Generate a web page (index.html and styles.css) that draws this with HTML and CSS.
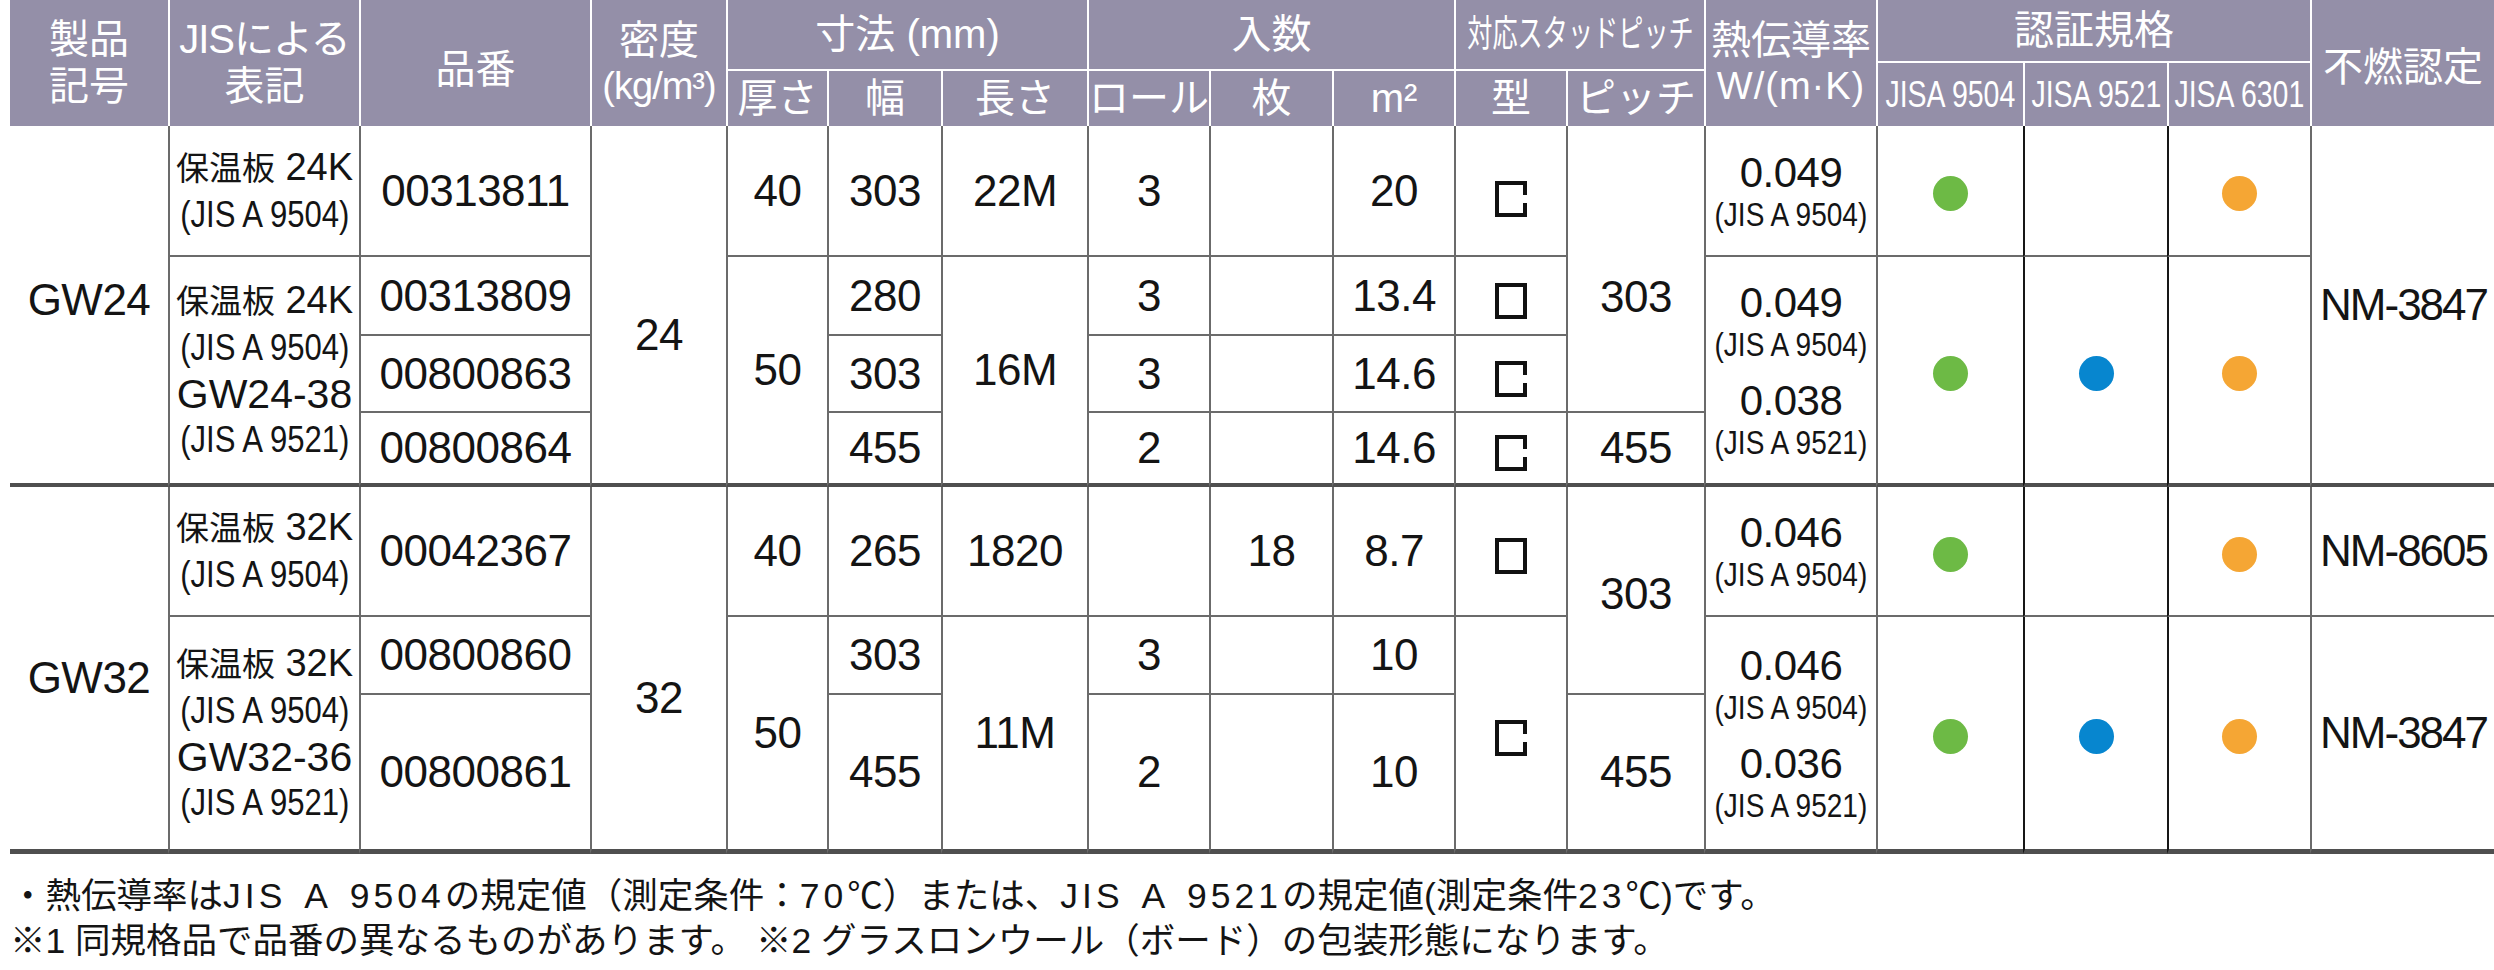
FILE: index.html
```html
<!DOCTYPE html>
<html lang="ja">
<head>
<meta charset="utf-8">
<title>グラスウール保温板 製品仕様</title>
<link rel="stylesheet" href="styles.css">
</head>
<body>
<div class="page">
<table class="spec">
<colgroup>
<col class="c1"><col class="c2"><col class="c3"><col class="c4"><col class="c5"><col class="c6"><col class="c7"><col class="c8"><col class="c9"><col class="c10"><col class="c11"><col class="c12"><col class="c13"><col class="c14"><col class="c15"><col class="c16"><col class="c17">
</colgroup>
<thead>
<tr class="hr1">
<th rowspan="3" class="first"><div>製品</div><div>記号</div></th>
<th rowspan="3"><div class="hjis">JISによる</div><div>表記</div></th>
<th rowspan="3" class="hno">品番</th>
<th rowspan="3"><div>密度</div><div class="unit">(kg/m³)</div></th>
<th colspan="3" rowspan="2" class="grp">寸法 (mm)</th>
<th colspan="3" rowspan="2" class="grp">入数</th>
<th colspan="2" rowspan="2" class="grp"><div class="fit"><span class="sq sq68">対応スタッドピッチ</span></div></th>
<th rowspan="3"><div>熱伝導率</div><div class="wmk">W/(m·K)</div></th>
<th colspan="3" class="grp">認証規格</th>
<th rowspan="3" class="hfn">不燃認定</th>
</tr>
<tr class="hr2">
<th rowspan="2" class="jisa"><div class="fit"><span class="sq sq77">JISA 9504</span></div></th>
<th rowspan="2" class="jisa"><div class="fit"><span class="sq sq77">JISA 9521</span></div></th>
<th rowspan="2" class="jisa"><div class="fit"><span class="sq sq77">JISA 6301</span></div></th>
</tr>
<tr class="hr3">
<th>厚さ</th><th>幅</th><th>長さ</th><th>ロール</th><th>枚</th><th>m²</th><th>型</th><th>ピッチ</th>
</tr>
</thead>

<tbody class="g24">
<tr class="r1a">
<td rowspan="4" class="name bt up">GW24</td>
<td class="jis"><div class="ln"><span><span class="kj">保温板</span> 24K</span></div><div class="ln"><span class="sq js">(JIS A 9504)</span></div></td>
<td>00313811</td>
<td rowspan="4" class="dens bt">24</td>
<td>40</td><td>303</td><td>22M</td><td>3</td><td></td><td>20</td>
<td><svg class="stud low" viewBox="0 0 32 36" width="32" height="36"><path d="M30 14 V2 H2 V34 H30 V22" fill="none" stroke="#111" stroke-width="4"/></svg></td>
<td rowspan="3" class="pitch1">303</td>
<td class="k"><div class="kv">0.049</div><div class="fit ks"><span class="sq">(JIS A 9504)</span></div></td>
<td class="cert"><span class="dot green"></span></td>
<td class="cert dk"></td>
<td class="cert dk"><span class="dot orange"></span></td>
<td rowspan="4" class="nm bt">NM-3847</td>
</tr>
<tr class="r2a">
<td rowspan="3" class="jis bt"><div class="ln"><span><span class="kj">保温板</span> 24K</span></div><div class="ln"><span class="sq js">(JIS A 9504)</span></div><div class="ln gw">GW24-38</div><div class="ln"><span class="sq js">(JIS A 9521)</span></div></td>
<td>00313809</td>
<td rowspan="3" class="bt">50</td>
<td>280</td>
<td rowspan="3" class="bt">16M</td>
<td>3</td><td></td><td>13.4</td>
<td><svg class="stud" viewBox="0 0 32 36" width="32" height="36"><rect x="2" y="2" width="28" height="32" fill="none" stroke="#111" stroke-width="4"/></svg></td>
<td rowspan="3" class="k bt"><div class="kv">0.049</div><div class="fit ks"><span class="sq">(JIS A 9504)</span></div><div class="kv kv2">0.038</div><div class="fit ks"><span class="sq">(JIS A 9521)</span></div></td>
<td rowspan="3" class="cert bt"><span class="dot green"></span></td>
<td rowspan="3" class="cert dk bt"><span class="dot blue"></span></td>
<td rowspan="3" class="cert dk bt"><span class="dot orange"></span></td>
</tr>
<tr class="r3a">
<td>00800863</td><td>303</td><td>3</td><td></td><td>14.6</td>
<td><svg class="stud" viewBox="0 0 32 36" width="32" height="36"><path d="M30 14 V2 H2 V34 H30 V22" fill="none" stroke="#111" stroke-width="4"/></svg></td>
</tr>
<tr class="r4a last">
<td>00800864</td><td>455</td><td>2</td><td></td><td>14.6</td>
<td><svg class="stud" viewBox="0 0 32 36" width="32" height="36"><path d="M30 14 V2 H2 V34 H30 V22" fill="none" stroke="#111" stroke-width="4"/></svg></td>
<td>455</td>
</tr>
</tbody>

<tbody class="g32">
<tr class="r1b">
<td rowspan="3" class="name bt dn">GW32</td>
<td class="jis"><div class="ln"><span><span class="kj">保温板</span> 32K</span></div><div class="ln"><span class="sq js">(JIS A 9504)</span></div></td>
<td>00042367</td>
<td rowspan="3" class="dens bt">32</td>
<td>40</td><td>265</td><td>1820</td><td></td><td>18</td><td>8.7</td>
<td><svg class="stud" viewBox="0 0 32 36" width="32" height="36"><rect x="2" y="2" width="28" height="32" fill="none" stroke="#111" stroke-width="4"/></svg></td>
<td rowspan="2" class="pitch2">303</td>
<td class="k"><div class="kv">0.046</div><div class="fit ks"><span class="sq">(JIS A 9504)</span></div></td>
<td class="cert"><span class="dot green"></span></td>
<td class="cert dk"></td>
<td class="cert dk"><span class="dot orange"></span></td>
<td class="nm">NM-8605</td>
</tr>
<tr class="r2b">
<td rowspan="2" class="jis bt"><div class="ln"><span><span class="kj">保温板</span> 32K</span></div><div class="ln"><span class="sq js">(JIS A 9504)</span></div><div class="ln gw">GW32-36</div><div class="ln"><span class="sq js">(JIS A 9521)</span></div></td>
<td>00800860</td>
<td rowspan="2" class="bt">50</td>
<td>303</td>
<td rowspan="2" class="bt">11M</td>
<td>3</td><td></td><td>10</td>
<td rowspan="2" class="bt"><svg class="stud" viewBox="0 0 32 36" width="32" height="36"><path d="M30 14 V2 H2 V34 H30 V22" fill="none" stroke="#111" stroke-width="4"/></svg></td>
<td rowspan="2" class="k bt"><div class="kv">0.046</div><div class="fit ks"><span class="sq">(JIS A 9504)</span></div><div class="kv kv2">0.036</div><div class="fit ks"><span class="sq">(JIS A 9521)</span></div></td>
<td rowspan="2" class="cert bt"><span class="dot green"></span></td>
<td rowspan="2" class="cert dk bt"><span class="dot blue"></span></td>
<td rowspan="2" class="cert dk bt"><span class="dot orange"></span></td>
<td rowspan="2" class="nm bt">NM-3847</td>
</tr>
<tr class="r3b last">
<td>00800861</td><td>455</td><td>2</td><td></td><td>10</td><td>455</td>
</tr>
</tbody>
</table>

<div class="notes">
<p>・熱伝導率は<span class="fj">JIS A 9504</span>の規定値（測定条件：<span class="fd">70</span>℃）または、<span class="fj">JIS A 9521</span>の規定値(測定条件<span class="fd">23</span>℃)です。</p>
<p>※1 同規格品で品番の異なるものがあります。 ※2 グラスロンウール（ボード）の包装形態になります。</p>
</div>
</div>
</body>
</html>
```

FILE: styles.css
```css
html, body {
  margin: 0;
  padding: 0;
  background: #ffffff;
  overflow: hidden;
}

body {
  font-family: "Liberation Sans", "Noto Sans CJK JP", sans-serif;
  color: #141414;
}

.page {
  width: 2484px;
  padding-left: 10px;
}

/* ---------- table ---------- */
.spec {
  width: 2484px;
  table-layout: fixed;
  border-collapse: separate;
  border-spacing: 0;
}

.c1 { width: 158px; }
.c2 { width: 191px; }
.c3 { width: 231px; }
.c4 { width: 136px; }
.c5 { width: 101px; }
.c6 { width: 114px; }
.c7 { width: 146px; }
.c8 { width: 122px; }
.c9 { width: 123px; }
.c10 { width: 122px; }
.c11 { width: 112px; }
.c12 { width: 138px; }
.c13 { width: 172px; }
.c14 { width: 147px; }
.c15 { width: 144px; }
.c16 { width: 143px; }
.c17 { width: 184px; }

.spec th,
.spec td {
  box-sizing: border-box;
  padding: 0;
  text-align: center;
  vertical-align: middle;
  white-space: nowrap;
  overflow: visible;
}

/* ---------- header ---------- */
.spec th {
  background: #948fa8;
  color: #ffffff;
  font-weight: 400;
  font-size: 40px;
  line-height: 1.17;
  border-left: 2px solid #ffffff;
}

.spec th.first {
  border-left: 0;
}

.spec th.grp {
  border-bottom: 2px solid #ffffff;
}

.spec th.hno { padding-top: 12px; }
.spec th.hfn { padding-top: 8px; }

.hr1 { height: 63px; }
.hr2 { height: 8px; }
.hr3 { height: 55px; }

.hjis { letter-spacing: -1px; }
.unit { font-size: 38px; letter-spacing: -1px; }
.wmk { font-size: 38px; letter-spacing: 1px; }

.fit {
  display: flex;
  justify-content: center;
}

.sq {
  display: inline-block;
  transform-origin: 50% 50%;
}

.sq68 { font-size: 37px; transform: scaleX(0.68); }
.sq77 { font-size: 37px; transform: scaleX(0.77); }

/* ---------- body ---------- */
.spec td {
  font-size: 44px;
  line-height: 1;
  letter-spacing: -0.5px;
  border-left: 2px solid #6b6b6b;
  border-bottom: 2px solid #6b6b6b;
}

.spec td.name {
  border-left: 0;
}

.spec td.cert.dk {
  border-left-color: #161616;
}

.g24 td.bt,
.g24 tr.last td {
  border-bottom: 4px solid #4f4f4f;
}

.g32 td.bt,
.g32 tr.last td {
  border-bottom: 5px solid #4f4f4f;
}

.r1a { height: 131px; }
.r2a { height: 79px; }
.r3a { height: 77px; }
.r4a { height: 74px; }
.r1b { height: 130px; }
.r2b { height: 78px; }
.r3b { height: 159px; }

.spec td.name.up { padding-bottom: 10px; }
.spec td.name.dn { padding-top: 20px; }
.spec td.dens { padding-top: 60px; }
.spec td.pitch1 { padding-top: 56px; }
.spec td.pitch2 { padding-top: 8px; }

.jis .ln {
  display: flex;
  justify-content: center;
  font-size: 38px;
  line-height: 46px;
  letter-spacing: 0;
}

.jis .kj { font-size: 33px; }
.jis .js { font-size: 37px; transform: scaleX(0.84); }
.jis .gw { font-size: 41px; }

.k .kv {
  font-size: 42px;
  line-height: 47px;
}

.k .kv2 { margin-top: 14px; }

.k .ks {
  font-size: 33px;
  line-height: 37px;
  letter-spacing: 0;
}

.k .ks .sq { transform: scaleX(0.85); }

.spec td.nm {
  text-align: left;
  padding-left: 8px;
  letter-spacing: -2px;
}

.stud {
  display: inline-block;
  vertical-align: middle;
  margin-top: 6px;
}

.stud.low {
  margin-top: 16px;
}

.dot {
  display: inline-block;
  width: 35px;
  height: 35px;
  border-radius: 50%;
  vertical-align: middle;
}

.green { background: #6dba45; }
.blue { background: #0786cf; }
.orange { background: #f5a634; }

/* ---------- notes ---------- */
.notes {
  padding-top: 20px;
  font-size: 35.5px;
  line-height: 45px;
  color: #141414;
}

.notes p {
  margin: 0;
  white-space: nowrap;
}

.notes .fj {
  letter-spacing: 4px;
  word-spacing: 6px;
}

.notes .fd {
  letter-spacing: 4px;
}
```
